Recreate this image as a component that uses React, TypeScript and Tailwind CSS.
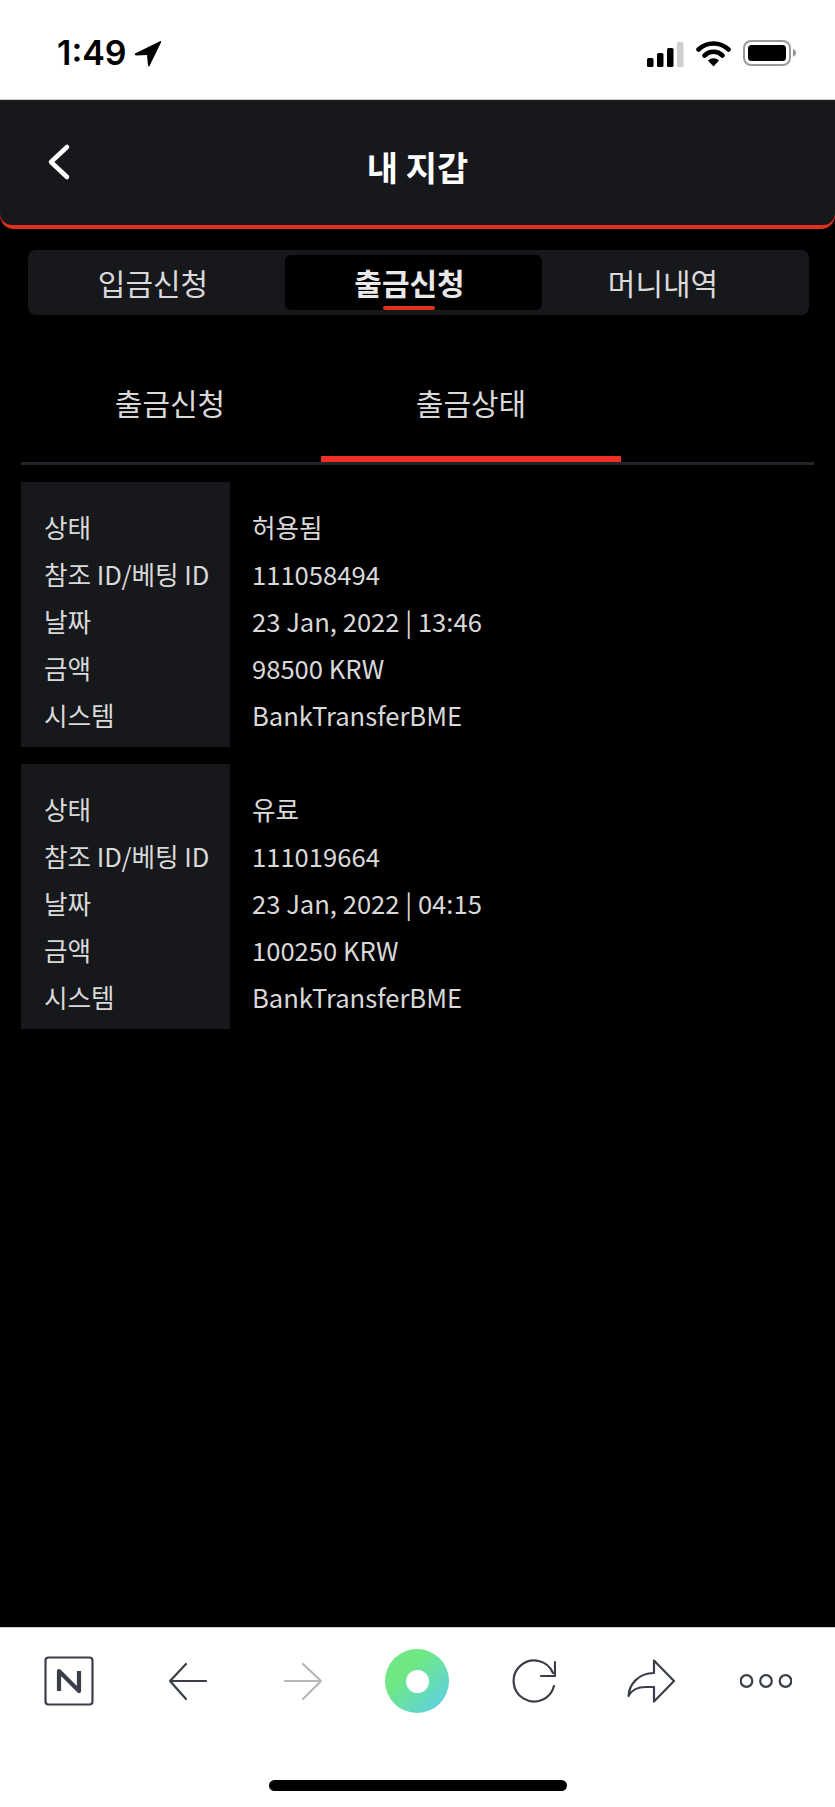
import React from "react";

const rows1 = [
  ["상태", "허용됨"],
  ["참조 ID/베팅 ID", "111058494"],
  ["날짜", "23 Jan, 2022 | 13:46"],
  ["금액", "98500 KRW"],
  ["시스템", "BankTransferBME"],
];
const rows2 = [
  ["상태", "유료"],
  ["참조 ID/베팅 ID", "111019664"],
  ["날짜", "23 Jan, 2022 | 04:15"],
  ["금액", "100250 KRW"],
  ["시스템", "BankTransferBME"],
];

function Card({ rows }: { rows: string[][] }) {
  return (
    <div className="flex h-[265px] text-[25.6px] leading-[47px] text-[#d9d9d9]">
      <div className="w-[209px] bg-[#17181c] pl-[23px] pt-[21px] whitespace-nowrap">
        {rows.map((r) => (
          <div key={r[0]}>{r[0]}</div>
        ))}
      </div>
      <div className="pl-[22px] pt-[21px] whitespace-nowrap">
        {rows.map((r) => (
          <div key={r[0]}>{r[1]}</div>
        ))}
      </div>
    </div>
  );
}

export default function App() {
  return (
    <div className="w-[835px] h-[1807px] bg-black flex flex-col overflow-hidden font-['Noto_Sans_CJK_KR','Noto_Sans',sans-serif]">
      {/* status bar */}
      <div className="h-[100px] bg-white flex items-start justify-between pl-[57px] pr-[38px] pt-[38px] border-b border-[#d0d0d0] shrink-0">
        <div className="flex items-center gap-[7px] h-[30px]">
          <span className="font-['Inter',sans-serif] font-semibold text-[34px] leading-[30px] text-black">1:49</span>
          <svg width="28" height="27" viewBox="0 0 28 27" className="mt-[1px]">
            <path d="M1 13.5 L26 1.2 Q27.5 0.8 27 2.4 L15.5 26 Q14.5 27 14 25.5 L13 15 L2 15.5 Q0 15 1 13.5 Z" fill="#000" />
          </svg>
        </div>
        <div className="flex items-center h-[30px]">
          <svg width="37" height="25" viewBox="0 0 37 25" className="mt-[2px]">
            <rect x="0" y="16" width="6.5" height="9" rx="1.5" fill="#000" />
            <rect x="10" y="11" width="6.5" height="14" rx="1.5" fill="#000" />
            <rect x="20" y="6" width="6.5" height="19" rx="1.5" fill="#000" />
            <rect x="30" y="0" width="6.5" height="25" rx="1.5" fill="#cfcfcf" />
          </svg>
          <svg width="35" height="27" viewBox="0 0 35 27" className="ml-[12px]">
            <path d="M2.5 9.5 C11 1.5 24 1.5 32.5 9.5" fill="none" stroke="#000" strokeWidth="4.6" strokeLinecap="round" />
            <path d="M8.5 15.5 C13.5 10.5 21.5 10.5 26.5 15.5" fill="none" stroke="#000" strokeWidth="4.6" strokeLinecap="round" />
            <path d="M12 20.5 C15.5 17.5 19.5 17.5 23 20.5 L17.5 26.5 Z" fill="#000" />
          </svg>
          <svg width="54" height="26" viewBox="0 0 54 26" className="ml-[12px]">
            <rect x="1" y="1" width="46" height="24" rx="7" fill="none" stroke="#9a9a9a" strokeWidth="2" />
            <rect x="5" y="5" width="38" height="16" rx="3.5" fill="#000" />
            <path d="M50 9 Q53 10.5 53 13 Q53 15.5 50 17 Z" fill="#8f8f8f" />
          </svg>
        </div>
      </div>

      {/* header */}
      <div className="h-[129px] bg-[#e0301e] rounded-b-[14px] shrink-0">
        <div className="relative h-[125px] bg-[#17181c] rounded-b-[12px] flex items-center justify-center">
          <svg width="26" height="38" viewBox="0 0 26 38" className="absolute left-[46px] top-[43px]">
            <path d="M21 4 L5 19 L21 34" fill="none" stroke="#fff" strokeWidth="4.5" strokeLinecap="round" strokeLinejoin="round" />
          </svg>
          <span className="text-white font-bold text-[34px] leading-[40px] mt-[8px]">내 지갑</span>
        </div>
      </div>

      {/* main tabs */}
      <div className="ml-[28px] mr-[26px] mt-[21px] h-[65px] bg-[#17181c] rounded-[8px] flex items-center text-[30px] text-[#d9d9d9] shrink-0">
        <div className="w-[250px] text-center">입금신청</div>
        <div className="relative ml-[7px] w-[257px] h-[55px] bg-black rounded-[6px] flex items-center justify-center pr-[8px] font-bold">
          <span className="text-[#e8e8e8]">출금신청</span>
          <div className="absolute left-[98px] bottom-0 w-[52px] h-[4px] bg-[#e0301e] rounded-full" />
        </div>
        <div className="w-[242px] text-center">머니내역</div>
      </div>

      {/* sub tabs */}
      <div className="mx-[21px] mt-[50px] h-[100px] border-b-[3px] border-[#23242b] flex shrink-0 text-[30px] text-[#d9d9d9]">
        <div className="w-[300px] h-[97px] text-center leading-[74px] pr-[2px]">출금신청</div>
        <div className="w-[300px] h-[97px] text-center leading-[74px] border-b-[6px] border-[#ee3124]">출금상태</div>
      </div>

      {/* cards */}
      <div className="mx-[21px] mt-[17px] flex flex-col gap-[17px] shrink-0">
        <Card rows={rows1} />
        <Card rows={rows2} />
      </div>

      <div className="flex-1" />

      {/* bottom browser bar */}
      <div className="h-[180px] bg-white border-t border-[#d0d0d0] shrink-0 flex flex-col items-center">
        <div className="w-full flex items-center pl-[44px] mt-[20px] h-[66px]">
          <svg width="50" height="50" viewBox="0 0 50 50" className="shrink-0">
            <rect x="1.5" y="1.5" width="47" height="47" rx="3" fill="none" stroke="#3a3f47" strokeWidth="2.2" />
            <path d="M15 35 V15 L35 35 V15" fill="none" stroke="#3a3f47" strokeWidth="4.2" strokeLinejoin="round" />
          </svg>
          <svg width="40" height="40" viewBox="0 0 40 40" className="ml-[74px] shrink-0">
            <path d="M38 20 H2 M18 3 L2 20 L18 38" fill="none" stroke="#3a3f47" strokeWidth="2.2" strokeLinecap="round" strokeLinejoin="round" />
          </svg>
          <svg width="40" height="40" viewBox="0 0 40 40" className="ml-[75px] shrink-0">
            <path d="M2 20 H38 M20 3 L38 20 L20 38" fill="none" stroke="#b7b7b7" strokeWidth="2.2" strokeLinecap="round" strokeLinejoin="round" />
          </svg>
          <div className="ml-[62px] shrink-0 w-[64px] h-[64px] rounded-full bg-gradient-to-br from-[#6fe784] from-[35%] to-[#5fcfe0] to-[92%] flex items-center justify-center">
            <div className="w-[23px] h-[23px] rounded-full bg-white" />
          </div>
          <svg width="44" height="46" viewBox="0 0 44 46" className="ml-[63px] shrink-0">
            <path d="M42 28 A20.5 20.5 0 1 1 41 15" fill="none" stroke="#3a3f47" strokeWidth="2.2" strokeLinecap="round" />
            <path d="M43 4 V18 H29" fill="none" stroke="#3a3f47" strokeWidth="2.2" strokeLinecap="round" strokeLinejoin="round" />
          </svg>
          <svg width="48" height="44" viewBox="0 0 48 44" className="ml-[71px] shrink-0">
            <path d="M27 1.5 L47 22 L27 42.5 V28 H19 C10 28 4 32 1.5 37 C2 26 11 14 27 14 Z" fill="none" stroke="#3a3f47" strokeWidth="2.2" strokeLinecap="round" strokeLinejoin="round" />
          </svg>
          <svg width="52" height="20" viewBox="0 0 52 20" className="ml-[65px] shrink-0">
            <circle cx="6.5" cy="10" r="5.8" fill="none" stroke="#3a3f47" strokeWidth="2.2" />
            <circle cx="26" cy="10" r="5.8" fill="none" stroke="#3a3f47" strokeWidth="2.2" />
            <circle cx="45.5" cy="10" r="5.8" fill="none" stroke="#3a3f47" strokeWidth="2.2" />
          </svg>
        </div>
        <div className="mt-[66px] w-[298px] h-[11px] bg-black rounded-full" />
      </div>
    </div>
  );
}
